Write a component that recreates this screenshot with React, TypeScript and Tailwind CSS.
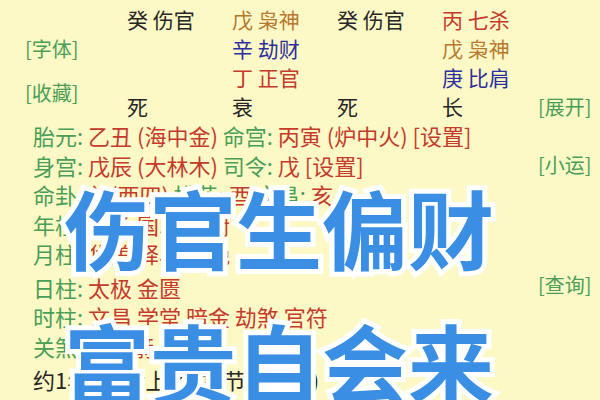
import * as React from "react"

const G = "text-[#4a9e58]"
const R = "text-[#c43a2c]"
const B = "text-[#2c2f9e]"
const O = "text-[#b7782f]"
const K = "text-[#262626]"

type Cell = { t: string; c: string } | null

const grid: Cell[] = [
    { t: "癸 伤官", c: K }, { t: "戊 枭神", c: O }, { t: "癸 伤官", c: K }, { t: "丙 七杀", c: R },
    null, { t: "辛 劫财", c: B }, null, { t: "戊 枭神", c: O },
    null, { t: "丁 正官", c: R }, null, { t: "庚 比肩", c: B },
    { t: "死", c: K }, { t: "衰", c: K }, { t: "死", c: K }, { t: "长", c: K },
]

function Line({ children, className = "" }: { children: React.ReactNode; className?: string }) {
    return <div className={`whitespace-nowrap ${className}`}>{children}</div>
}

export default function App() {
    return (
        <div
            className="relative flex w-[600px] h-[400px] overflow-hidden bg-[#fcf9c6] text-[21px] leading-[29px]"
            style={{ fontFamily: '"Noto Sans CJK SC", "Noto Sans", sans-serif' }}
        >
            <div className="flex flex-col flex-1 min-w-0">
                {/* top pillars */}
                <div className="flex">
                    <div className={`w-[127px] shrink-0 pl-[25px] flex flex-col text-[20px] ${G}`}>
                        <span className="mt-[34px]">[字体]</span>
                        <span className="mt-[15px]">[收藏]</span>
                    </div>
                    <div className="grid grid-cols-[105px_105px_105px_105px] pt-[5px] shrink-0">
                        {grid.map((cell, i) => (
                            <div key={i} className={`h-[29px] whitespace-nowrap ${cell ? cell.c : ""}`}>{cell ? cell.t : ""}</div>
                        ))}
                    </div>
                </div>

                {/* details */}
                <div className="pl-[33px] flex flex-col text-[22px] leading-[29.5px]">
                    <Line>
                        <span className={G}>胎元: </span>
                        <span className={R}>乙丑 (海中金) </span>
                        <span className={G}>命宫: </span>
                        <span className={R}>丙寅 (炉中火) [设置]</span>
                    </Line>
                    <Line>
                        <span className={G}>身宫: </span>
                        <span className={R}>戊辰 (大林木) </span>
                        <span className={G}>司令: </span>
                        <span className={R}>戊 [设置]</span>
                    </Line>
                    <Line>
                        <span className={G}>命卦: </span>
                        <span className={R}>兑(西四) </span>
                        <span className={G}>桃花: </span>
                        <span className={R}>酉 </span>
                        <span className={G}>文昌: </span>
                        <span className={R}>亥</span>
                    </Line>
                    <Line>
                        <span className={G}>年柱: </span>
                        <span className={R}>天乙 国印 天厨</span>
                    </Line>
                    <Line>
                        <span className={G}>月柱: </span>
                        <span className={R}>华盖 驿马 红艳</span>
                    </Line>
                    <Line className="mt-[4px]">
                        <span className={G}>日柱: </span>
                        <span className={R}>太极 金匮</span>
                    </Line>
                    <Line>
                        <span className={G}>时柱: </span>
                        <span className={R}>文昌 学堂 暗金 劫煞 官符</span>
                    </Line>
                    <Line>
                        <span className={G}>关煞: </span>
                        <span className={R}>将军箭 天狗</span>
                    </Line>
                    <Line className={`mt-[4px] ${K}`}>约1年9月后上运 (按节气交接)</Line>
                </div>
            </div>

            {/* right buttons */}
            <div className={`w-[62px] shrink-0 flex flex-col text-[20px] whitespace-nowrap ${G}`}>
                <span className="mt-[92px]">[展开]</span>
                <span className="mt-[29px]">[小运]</span>
                <span className="mt-[91px]">[查询]</span>
            </div>

            {/* headline overlay */}
            <div className="absolute left-[64px] top-[184px] flex flex-col gap-[48px] text-[86px] leading-[86px] font-bold text-[#3a8fe4] [-webkit-text-stroke:10px_#ffffff] [paint-order:stroke_fill] whitespace-nowrap">
                <span>伤官生偏财</span>
                <span>富贵自会来</span>
            </div>
        </div>
    )
}
